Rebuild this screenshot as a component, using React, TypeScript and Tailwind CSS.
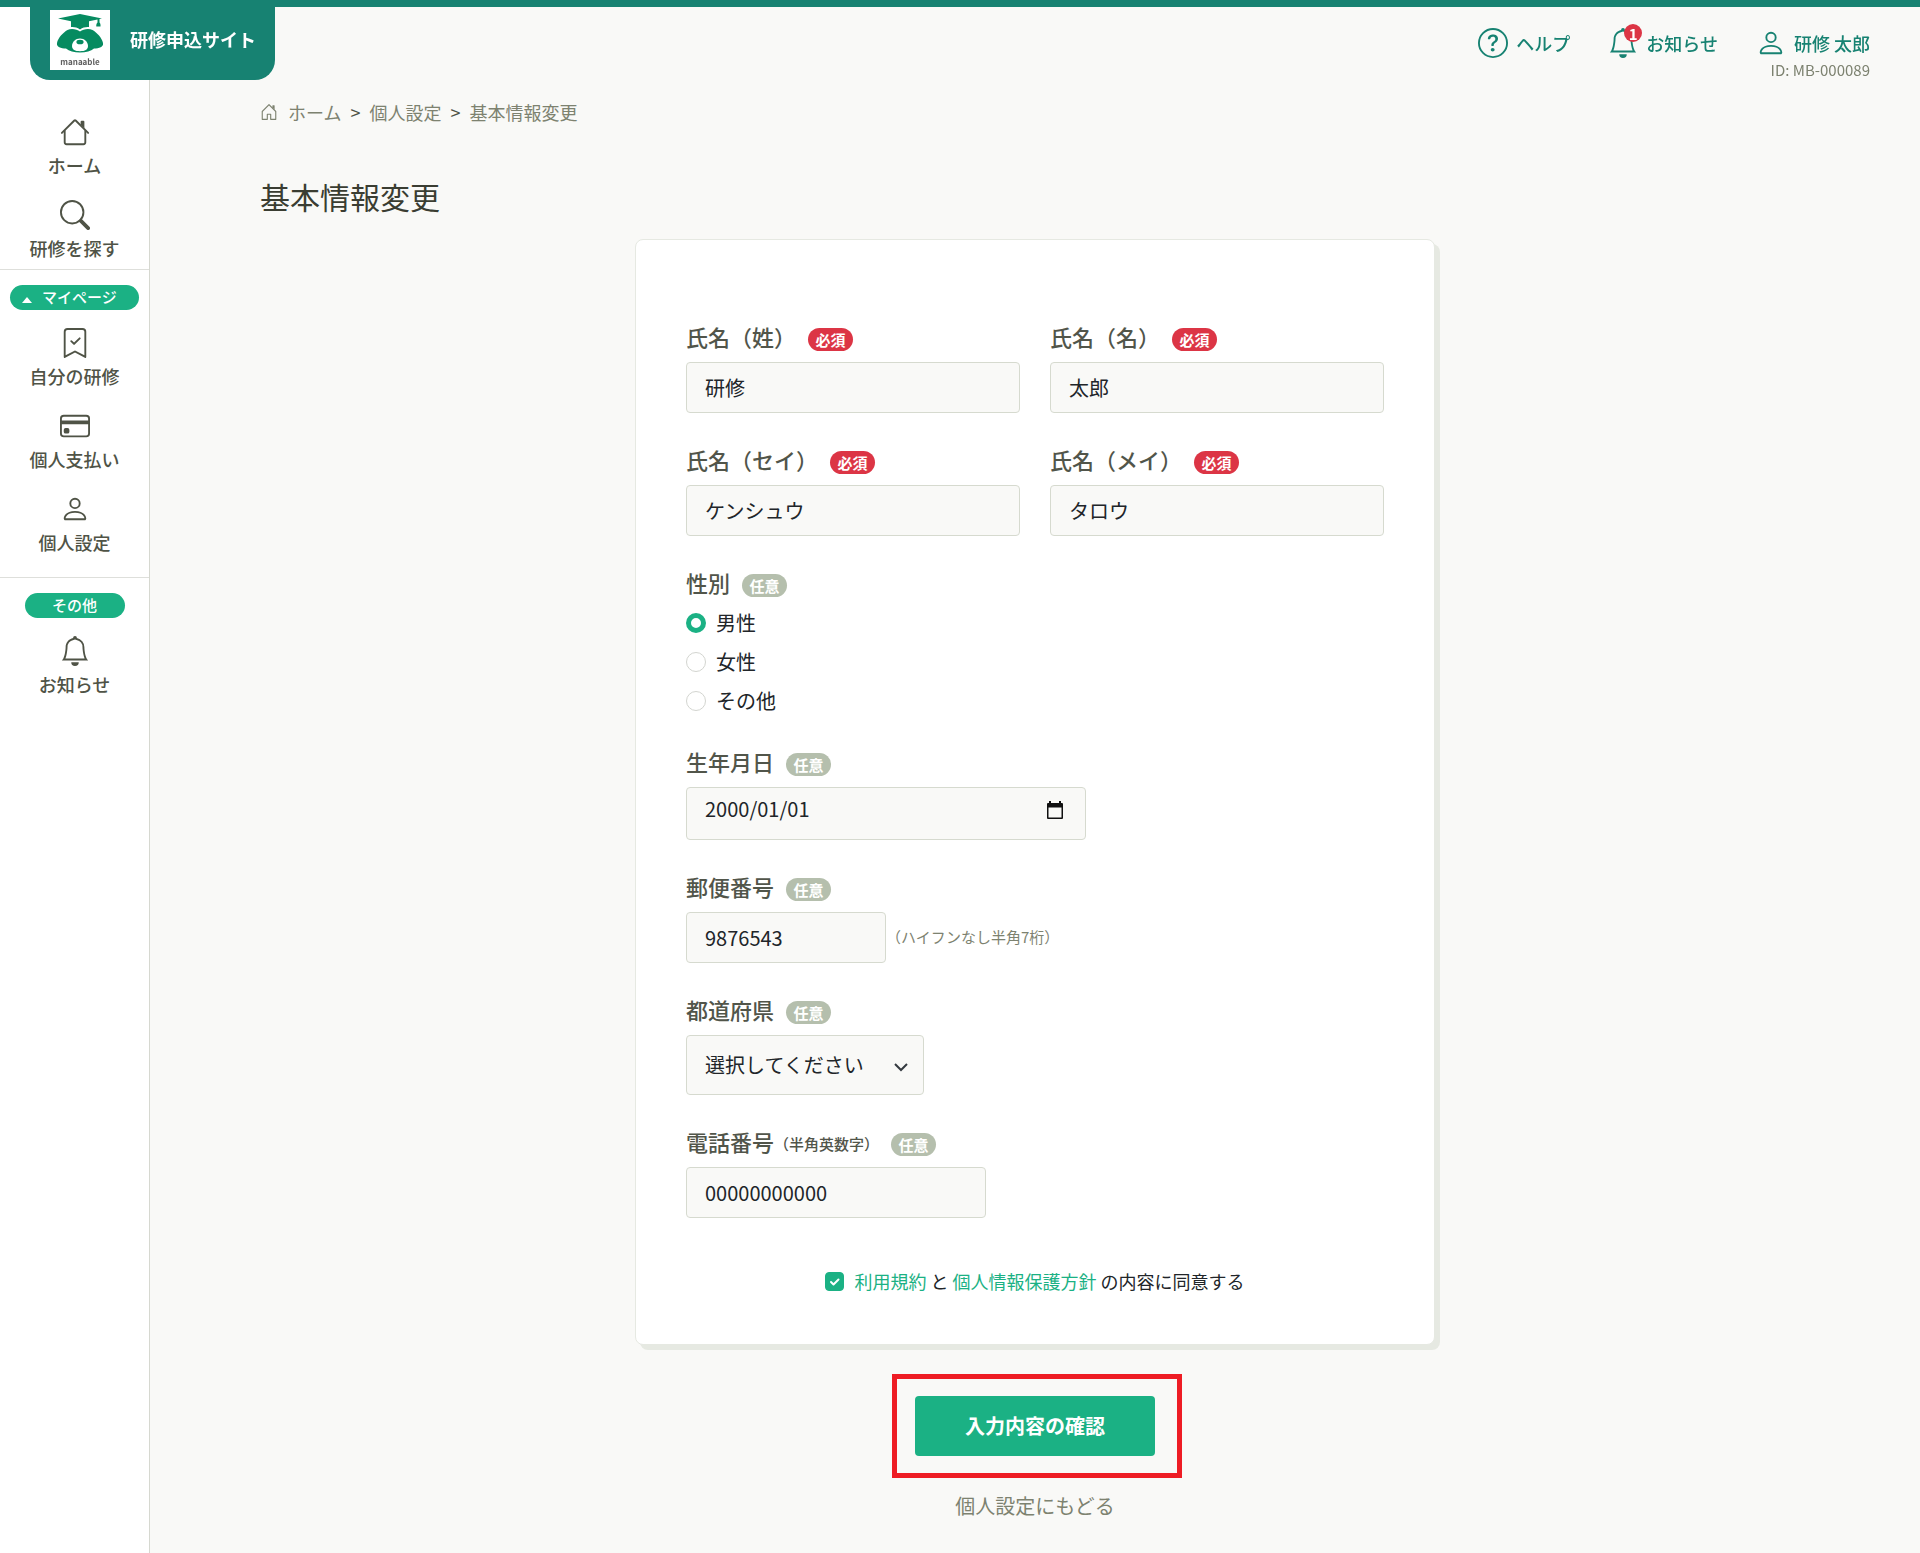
import { useState, type ReactNode } from "react";
import {
  BsBell,
  BsBookmarkCheck,
  BsCreditCard,
  BsPerson,
  BsQuestionCircle,
} from "react-icons/bs";

const inputClass =
  "block h-[51px] rounded border border-[#d6dacf] bg-[#f9f9f7] px-[18px] text-xl text-[#212529] outline-none focus:border-[#1bb184]";

function HouseIcon() {
  return (
    <svg viewBox="0 0 16 16" fill="currentColor" className="size-[30px]" aria-hidden="true">
      <path d="M2 13.5V7h1v6.5a.5.5 0 0 0 .5.5h9a.5.5 0 0 0 .5-.5V7h1v6.5a1.5 1.5 0 0 1-1.5 1.5h-9A1.5 1.5 0 0 1 2 13.5zm11-11V6l-2-2V2.5a.5.5 0 0 1 .5-.5h1a.5.5 0 0 1 .5.5z" />
      <path d="M7.293 1.5a1 1 0 0 1 1.414 0l6.647 6.646a.5.5 0 0 1-.708.708L8 2.207 1.354 8.854a.5.5 0 1 1-.708-.708L7.293 1.5z" />
    </svg>
  );
}

function HouseDoorIcon() {
  return (
    <svg viewBox="0 0 16 16" fill="currentColor" className="size-[18px]" aria-hidden="true">
      <path d="M7.646 1.146a.5.5 0 0 1 .708 0l6 6a.5.5 0 0 1 .146.354v7a.5.5 0 0 1-.5.5H9.5a.5.5 0 0 1-.5-.5v-4H7v4a.5.5 0 0 1-.5.5H2a.5.5 0 0 1-.5-.5v-7a.5.5 0 0 1 .146-.354l6-6zM2.5 7.707V14H6v-4a.5.5 0 0 1 .5-.5h3a.5.5 0 0 1 .5.5v4h3.5V7.707L8 2.207l-5.5 5.5z" />
      <path d="M13 2.5V6l-2-2V2.5a.5.5 0 0 1 .5-.5h1a.5.5 0 0 1 .5.5z" />
    </svg>
  );
}

function SearchIcon() {
  return (
    <svg viewBox="0 0 16 16" fill="currentColor" className="size-[30px]" aria-hidden="true">
      <path d="M10.442 10.442a1 1 0 0 1 1.415 0l3.85 3.85a1 1 0 0 1-1.414 1.415l-3.85-3.85a1 1 0 0 1 0-1.415z" />
      <path d="M6.5 12a5.5 5.5 0 1 0 0-11 5.5 5.5 0 0 0 0 11zM13 6.5a6.5 6.5 0 1 1-13 0 6.5 6.5 0 0 1 13 0z" />
    </svg>
  );
}

function Logo() {
  return (
    <span className="flex size-[60px] flex-col items-center bg-white pt-1">
      <svg viewBox="0 0 48 40" className="h-10 w-12" aria-hidden="true">
        <path
          fill="#068b60"
          d="M2 4.5 24 0l22 4.500-2.500.6V8.500c1 1 1.200 2.500 1 4h-4.200c-.2-1.500.2-3 1.200-4V5.500L33 7.300V13c-3.500-.2-6 .3-9 2.500-3-2.200-5.500-2.700-9-2.500V7.300z"
        />
        <path
          fill="#068b60"
          d="M24 17.500c3-2.500 9-3.500 12.500-1.500C41 18.500 46 24 47 29c.8 4-4 5.500-9 5.500-3 2.700-8 3.900-14 3.900s-11-1.200-14-3.900c-5 0-9.800-1.500-9-5.500 1-5 6-10.500 10.500-13 3.500-2 9.500-1 12.500 1.500z"
        />
        <path fill="#fff" d="M24 24.500c4.500 0 8 3.500 8 7.500 0 3.500-3 5.200-8 5.200s-8-1.700-8-5.200c0-4 3.500-7.500 8-7.500z" />
        <ellipse cx="24" cy="28" rx="3.6" ry="2.3" fill="#068b60" />
      </svg>
      <span className="text-[8px] leading-4 font-bold text-[#5f5f5f]">manaable</span>
    </span>
  );
}

function NavItem({ icon, label }: { icon: ReactNode; label: string }) {
  return (
    <a href="#" className="flex flex-col items-center gap-[5px] text-lg leading-[26px] font-medium">
      {icon}
      {label}
    </a>
  );
}

function Badge({ required }: { required?: boolean }) {
  return (
    <span
      className={`mt-1.5 ml-3 flex h-[23px] w-[45px] items-center justify-center rounded-full text-[15px] leading-none font-bold text-white ${
        required ? "bg-[#dc3545]" : "bg-[#b5bfad]"
      }`}
    >
      {required ? "必須" : "任意"}
    </span>
  );
}

interface FieldProps {
  id: string;
  label: string;
  note?: string;
  required?: boolean;
  children: ReactNode;
}

function Field({ id, label, note, required, children }: FieldProps) {
  return (
    <div>
      <label htmlFor={id} className="mb-2.5 flex h-8 items-center text-[22px] font-medium text-[#51554a]">
        {label}
        {note && <span className="mt-1.5 text-[15px]">{note}</span>}
        <Badge required={required} />
      </label>
      {children}
    </div>
  );
}

const nameFields = [
  { id: "last-name", label: "氏名（姓）", value: "研修" },
  { id: "first-name", label: "氏名（名）", value: "太郎" },
  { id: "last-kana", label: "氏名（セイ）", value: "ケンシュウ" },
  { id: "first-kana", label: "氏名（メイ）", value: "タロウ" },
];

const genders = ["男性", "女性", "その他"];

function Header() {
  return (
    <header className="fixed inset-x-0 top-0 z-10 flex items-start justify-between border-t-[7px] border-[#178272] pr-[50px] pl-[30px]">
      <a
        href="#"
        className="flex h-[73px] w-[245px] items-center gap-5 rounded-b-[20px] bg-[#178272] pb-[7px] pl-5 text-lg font-bold text-white"
      >
        <Logo />
        <span className="pb-0.5">研修申込サイト</span>
      </a>
      <nav className="mt-[21px] flex gap-[38px] text-lg leading-[30px] font-medium text-[#178272]">
        <a href="#" className="flex h-[30px] items-center gap-2">
          <BsQuestionCircle className="size-[30px]" />
          ヘルプ
        </a>
        <a href="#" className="flex h-[30px] items-center gap-2">
          <span className="relative">
            <BsBell className="size-[30px]" />
            <span className="absolute -top-1 -right-1 flex size-[18px] items-center justify-center rounded-full bg-[#dc3545] text-[15px] leading-none font-bold text-white">
              1
            </span>
          </span>
          お知らせ
        </a>
        <a href="#" className="flex flex-col items-end">
          <span className="flex h-[30px] items-center gap-2">
            <BsPerson className="size-[30px]" />
            研修 太郎
          </span>
          <span className="text-[15px] leading-6 font-normal text-[#7d8270]">ID: MB-000089</span>
        </a>
      </nav>
    </header>
  );
}

function Sidebar() {
  return (
    <aside className="w-[150px] shrink-0 border-r border-[#d6d8d0] bg-white pt-[117px] text-[#4f5346]">
      <nav className="flex flex-col gap-[22px] border-b border-[#dedfdb] pb-2">
        <NavItem icon={<HouseIcon />} label="ホーム" />
        <NavItem icon={<SearchIcon />} label="研修を探す" />
      </nav>
      <nav className="flex flex-col gap-[22px] border-b border-[#dedfdb] pt-[15px] pb-[22px]">
        <button
          type="button"
          className="mx-2.5 -mb-1 flex h-[25px] items-center rounded-full bg-[#1bb184] pl-3 text-[15px] font-medium text-white"
        >
          <svg viewBox="0 0 10 6" className="mt-1 mr-2.5 h-1.5 w-2.5" aria-hidden="true">
            <path d="M5 0l5 6H0z" fill="currentColor" />
          </svg>
          マイページ
        </button>
        <NavItem icon={<BsBookmarkCheck className="size-[30px]" />} label="自分の研修" />
        <NavItem icon={<BsCreditCard className="size-[30px]" />} label="個人支払い" />
        <NavItem icon={<BsPerson className="size-[30px]" />} label="個人設定" />
      </nav>
      <nav className="flex flex-col gap-[18px] pt-[15px]">
        <p className="mx-auto flex h-[25px] w-[100px] items-center justify-center rounded-full bg-[#1bb184] text-[15px] font-medium text-white">
          その他
        </p>
        <NavItem icon={<BsBell className="size-[30px]" />} label="お知らせ" />
      </nav>
    </aside>
  );
}

export default function App() {
  const [gender, setGender] = useState("男性");
  const [agreed, setAgreed] = useState(true);

  return (
    <div
      lang="ja"
      className="flex min-h-screen bg-[#f9f9f7] font-['Noto_Sans_CJK_JP',sans-serif] text-[#212529]"
    >
      <Header />
      <Sidebar />
      <main className="min-w-0 flex-1 px-[110px] pt-24 pb-8">
        <nav className="flex items-center gap-[9px] text-lg leading-8 text-[#7d8270]">
          <a href="#" className="flex items-center gap-2.5">
            <HouseDoorIcon />
            ホーム
          </a>
          <span className="text-[#4f5346]">&gt;</span>
          <a href="#">個人設定</a>
          <span className="text-[#4f5346]">&gt;</span>
          <span>基本情報変更</span>
        </nav>
        <h1 className="mt-[46px] mb-5 text-3xl leading-[45px] text-[#3a3d32]">基本情報変更</h1>

        <form className="mx-auto max-w-[800px]" onSubmit={(e) => e.preventDefault()}>
          <div className="flex flex-col gap-[30px] rounded-lg border border-[#e6e9e2] bg-white px-[50px] pt-20 pb-12 shadow-[5px_5px_0_#e6e9e2]">
            <div className="grid grid-cols-2 gap-[30px]">
              {nameFields.map((f) => (
                <Field key={f.id} id={f.id} label={f.label} required>
                  <input id={f.id} type="text" defaultValue={f.value} className={`${inputClass} w-full`} />
                </Field>
              ))}
            </div>

            <fieldset>
              <legend className="mb-2.5 flex h-8 items-center text-[22px] font-medium text-[#51554a]">
                性別
                <Badge />
              </legend>
              <div className="flex flex-col gap-2.5">
                {genders.map((g) => (
                  <label key={g} className="flex h-[29px] items-center gap-2.5 text-xl">
                    <input
                      type="radio"
                      name="gender"
                      checked={gender === g}
                      onChange={() => setGender(g)}
                      className="size-5 appearance-none rounded-full border border-[#d3d5d0] bg-white checked:border-[5px] checked:border-[#1bb184]"
                    />
                    {g}
                  </label>
                ))}
              </div>
            </fieldset>

            <Field id="birthday" label="生年月日">
              <div className="relative w-[400px]">
                <input
                  id="birthday"
                  type="text"
                  defaultValue="2000/01/01"
                  className="block h-[53px] w-full rounded border border-[#d6dacf] bg-[#f9f9f7] px-[18px] pb-2.5 text-xl text-[#212529] outline-none"
                />
                <button type="button" aria-label="カレンダー" className="absolute top-[13px] right-[21px]">
                  <svg viewBox="0 0 20 20" className="size-5" aria-hidden="true">
                    <path
                      fillRule="evenodd"
                      d="M4 1h2v2h8V1h2v2h1a1 1 0 0 1 1 1v14a1 1 0 0 1-1 1H3a1 1 0 0 1-1-1V4a1 1 0 0 1 1-1h1zm-.5 6.500v10h13v-10z"
                      fill="#111"
                    />
                  </svg>
                </button>
              </div>
            </Field>

            <Field id="zip" label="郵便番号">
              <div className="flex items-center">
                <input id="zip" type="text" defaultValue="9876543" className={`${inputClass} w-[200px]`} />
                <span className="text-[15px] text-[#7d8270]">（ハイフンなし半角7桁）</span>
              </div>
            </Field>

            <Field id="prefecture" label="都道府県">
              <div className="relative w-[238px]">
                <select
                  id="prefecture"
                  className="block h-[60px] w-full appearance-none rounded border border-[#d6dacf] bg-[#f9f9f7] px-[18px] text-xl text-[#212529] outline-none"
                >
                  <option>選択してください</option>
                </select>
                <svg
                  viewBox="0 0 14 9"
                  className="pointer-events-none absolute top-7 right-4 h-[9px] w-3.5"
                  fill="none"
                  stroke="#343a40"
                  strokeWidth="2"
                  aria-hidden="true"
                >
                  <path d="M1 1l6 6 6-6" />
                </svg>
              </div>
            </Field>

            <Field id="tel" label="電話番号" note="（半角英数字）">
              <input id="tel" type="tel" defaultValue="00000000000" className={`${inputClass} w-[300px]`} />
            </Field>

            <div className="mt-[18px] flex h-[30px] items-center justify-center gap-2.5 text-lg">
              <span className="relative flex">
                <input
                  id="agree"
                  type="checkbox"
                  checked={agreed}
                  onChange={(e) => setAgreed(e.target.checked)}
                  className="size-[19px] appearance-none rounded border border-[#d6dacf] bg-white checked:border-[#1bb184] checked:bg-[#1bb184]"
                />
                {agreed && (
                  <svg
                    viewBox="0 0 19 19"
                    className="pointer-events-none absolute inset-0 size-[19px]"
                    fill="none"
                    stroke="#fff"
                    strokeWidth="2"
                    strokeLinecap="round"
                    strokeLinejoin="round"
                    aria-hidden="true"
                  >
                    <path d="M6 10l2.500 2.500L13.500 7.500" />
                  </svg>
                )}
              </span>
              <label htmlFor="agree">
                <a href="#" className="text-[#1bb184]">利用規約</a> と{" "}
                <a href="#" className="text-[#1bb184]">個人情報保護方針</a> の内容に同意する
              </label>
            </div>
          </div>

          <div className="mt-[51px] flex flex-col items-center gap-[35px] text-xl">
            <div className="relative">
              <button type="submit" className="h-[60px] w-60 rounded bg-[#1bb184] font-bold text-white">
                入力内容の確認
              </button>
              <div className="pointer-events-none absolute -top-[22px] -right-[27px] -bottom-[22px] -left-[23px] border-[5px] border-[#ee1c24]" />
            </div>
            <a href="#" className="leading-[30px] text-[#7d8270]">
              個人設定にもどる
            </a>
          </div>
        </form>
      </main>
    </div>
  );
}
